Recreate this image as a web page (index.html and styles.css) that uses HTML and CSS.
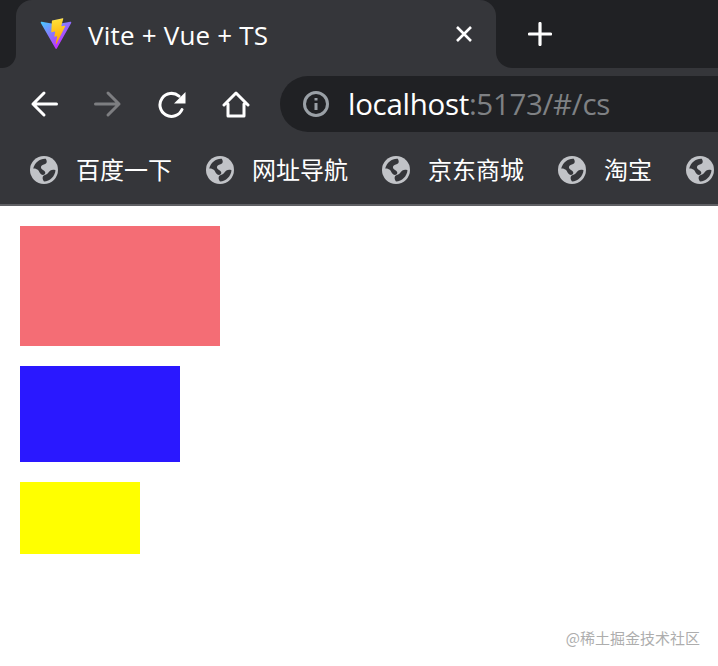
FILE: index.html
```html
<!DOCTYPE html>
<html lang="zh">
<head>
<meta charset="utf-8">
<title>Vite + Vue + TS</title>
<link rel="stylesheet" href="styles.css">
</head>
<body>
<svg class="defs" width="0" height="0" aria-hidden="true">
  <symbol id="globe" viewBox="0 0 28 28">
    <circle cx="14" cy="14" r="14" fill="#c1c3c7"/>
    <path fill="#35363a" d="M15.500 2.800C10 2.500 4.800 6.500 3.200 12.500c1.800-.2 3.600.3 4.900 1.600 1.300 1.300 1.600 3.600 3.300 4.500 1.600.8 3.600.2 3.900-1.500.3-1.800-1.600-2.700-3-3.600-1.300-.9-1.900-2.500-.8-3.700 1.200-1.300 3.500-1.100 4.700-2.500 1-1.200.6-3.400-.7-4.800Z"/>
    <path fill="#35363a" d="M25.500 14.300c-1.800-.7-3.600-.6-5.100.3-1.700 1-2.200 2.900-3.800 3.700-1.500.8-3.200.9-3.800 2.500-.5 1.500 0 3.200 1.200 4.800 6-.4 10.900-5.100 11.500-11.300Z"/>
  </symbol>
  <linearGradient id="vite-a" gradientUnits="userSpaceOnUse" x1="6" y1="33" x2="235" y2="344">
    <stop offset="0" stop-color="#41d1ff"/>
    <stop offset="1" stop-color="#bd34fe"/>
  </linearGradient>
  <linearGradient id="vite-b" gradientUnits="userSpaceOnUse" x1="194.65" y1="8.818" x2="236.076" y2="292.989">
    <stop offset="0" stop-color="#ffea83"/>
    <stop offset=".083" stop-color="#ffdd35"/>
    <stop offset="1" stop-color="#ffa800"/>
  </linearGradient>
</svg>

<header class="chrome">
  <div class="tabstrip">
    <div class="strip-edge"></div>
    <div class="tab">
      <svg class="tab-logo" viewBox="0 0 410 404" aria-hidden="true">
        <path fill="url(#vite-a)" d="M399.641 59.525 215.643 388.545c-3.799 6.793-13.559 6.833-17.415.073L10.582 59.556C6.38 52.19 12.68 43.266 21.028 44.76l184.195 32.923c1.175.21 2.378.208 3.553-.006l180.343-32.87c8.32-1.517 14.649 7.337 10.522 14.719Z"/>
        <path fill="url(#vite-b)" d="M292.965 1.574 156.801 28.255a5 5 0 0 0-4.03 4.611l-8.376 141.464c-.197 3.332 2.863 5.918 6.115 5.168l37.91-8.749c3.547-.818 6.752 2.306 6.023 5.873l-11.263 55.153c-.758 3.712 2.727 6.886 6.352 5.785l23.415-7.114c3.63-1.102 7.118 2.081 6.35 5.796l-17.899 86.633c-1.12 5.419 6.088 8.374 9.094 3.728l2.008-3.103 110.954-221.428c1.858-3.707-1.346-7.935-5.418-7.15l-39.022 7.532c-3.667.707-6.787-2.708-5.752-6.296l25.469-88.291c1.036-3.594-2.095-7.012-5.766-6.293Z"/>
      </svg>
      <span class="tab-title">Vite + Vue + TS</span>
      <svg class="tab-close" viewBox="0 0 18 18" aria-hidden="true"><path d="M2 2l14 14M16 2L2 16"/></svg>
    </div>
    <div class="strip-rest">
      <svg class="new-tab" viewBox="0 0 24 24" aria-hidden="true"><path d="M12 1.500v21M1.500 12h21"/></svg>
    </div>
  </div>

  <div class="toolbar">
    <svg class="nav-icon" viewBox="0 0 28 28" aria-hidden="true"><path d="M26.500 14H3M14 3 3 14l11 11"/></svg>
    <svg class="nav-icon nav-off" viewBox="0 0 28 28" aria-hidden="true"><path d="M1.500 14H25M14 3l11 11-11 11"/></svg>
    <svg class="nav-icon" viewBox="0 0 28 28" aria-hidden="true"><path d="M24 19.500A11.500 11.500 0 1 1 21 6.200"/><path class="nav-fill" d="M27.500 2v11.500H16Z"/></svg>
    <svg class="nav-icon" viewBox="0 0 28 28" aria-hidden="true"><path class="nav-join" d="M6 14v12h16V14M2 15 14 3l12 12"/></svg>
    <div class="omnibox">
      <svg class="info" viewBox="0 0 26 26" aria-hidden="true">
        <circle cx="13" cy="13" r="11.500"/>
        <path d="M13 12v7M13 7v2.500"/>
      </svg>
      <div class="url"><span class="url-host">localhost</span>:5173/#/cs</div>
    </div>
  </div>

  <nav class="bookmarks">
    <a class="bookmark"><svg class="globe" aria-hidden="true"><use href="#globe"/></svg><span class="bookmark-label">百度一下</span></a>
    <a class="bookmark"><svg class="globe" aria-hidden="true"><use href="#globe"/></svg><span class="bookmark-label">网址导航</span></a>
    <a class="bookmark"><svg class="globe" aria-hidden="true"><use href="#globe"/></svg><span class="bookmark-label">京东商城</span></a>
    <a class="bookmark"><svg class="globe" aria-hidden="true"><use href="#globe"/></svg><span class="bookmark-label">淘宝</span></a>
    <a class="bookmark"><svg class="globe" aria-hidden="true"><use href="#globe"/></svg></a>
  </nav>
</header>

<main class="content">
  <div class="box box-red"></div>
  <div class="box box-blue"></div>
  <div class="box box-yellow"></div>
</main>

<div class="watermark">@稀土掘金技术社区</div>
</body>
</html>
```

FILE: styles.css
```css
* { box-sizing: border-box; }

html, body {
  margin: 0;
  height: 666px;
  overflow: hidden;
  background: #fff;
}

body {
  position: relative;
  font-family: "Open Sans", "Noto Sans CJK SC", sans-serif;
}

.defs { display: block; height: 0; }

.chrome {
  display: flex;
  flex-direction: column;
  height: 206px;
  background: #35363a;
  border-bottom: 2px solid #5f6064;
}

/* tab strip */
.tabstrip {
  display: flex;
  height: 68px;
  flex: none;
  background: linear-gradient(#202124 50%, #35363a 50%);
}

.strip-edge {
  width: 16px;
  background: #202124;
  border-bottom-right-radius: 14px;
}

.tab {
  display: flex;
  align-items: center;
  width: 480px;
  padding: 0 24px 0 24px;
  background: #35363a;
  border-radius: 16px 16px 0 0;
}

.tab-logo { width: 32px; height: 32px; flex: none; }

.tab-title {
  flex: 1;
  margin: 2px 0 0 16px;
  color: #fff;
  font-size: 26px;
  line-height: 32px;
  letter-spacing: .2px;
}

.tab-close {
  width: 18px;
  height: 18px;
  flex: none;
  margin-right: -1px;
  fill: none;
  stroke: #fff;
  stroke-width: 2.600;
}

.strip-rest {
  flex: 1;
  display: flex;
  align-items: center;
  padding: 0 0 0 32px;
  background: #202124;
  border-bottom-left-radius: 16px;
}

.new-tab {
  width: 24px;
  height: 24px;
  fill: none;
  stroke: #fff;
  stroke-width: 3.200;
  stroke-linecap: round;
}

/* toolbar */
.toolbar {
  display: flex;
  align-items: center;
  height: 68px;
  flex: none;
  padding: 8px 0 4px 30px;
  gap: 36px;
}

.nav-icon {
  width: 28px;
  height: 28px;
  flex: none;
  fill: none;
  stroke: #fff;
  stroke-width: 3;
  stroke-linecap: round;
  stroke-linejoin: round;
}

.nav-off { stroke: #7d7e81; }

.nav-fill { fill: #fff; stroke: none; }

.omnibox {
  flex: 1;
  display: flex;
  align-items: center;
  height: 56px;
  margin-left: -6px;
  padding-left: 23px;
  background: #202124;
  border-radius: 28px 0 0 28px;
}

.info {
  width: 26px;
  height: 26px;
  flex: none;
  fill: none;
  stroke: #9aa0a6;
  stroke-width: 3;
}

.url {
  margin-left: 19px;
  color: #7f8184;
  font-size: 29.500px;
  line-height: 40px;
  letter-spacing: -.3px;
}

.url-host { color: #fff; }

/* bookmarks */
.bookmarks {
  display: flex;
  align-items: center;
  flex: 1;
  padding: 0 0 0 30px;
  gap: 34px;
  overflow: hidden;
}

.bookmark {
  display: flex;
  align-items: center;
  flex: none;
  gap: 18px;
  color: #fff;
  font-family: "Noto Sans CJK SC", sans-serif;
  font-size: 24px;
  line-height: 32px;
}

.bookmark-label { margin-top: -2px; }

.globe { width: 28px; height: 28px; flex: none; }

/* page */
.content {
  display: flex;
  flex-direction: column;
  align-items: flex-start;
  gap: 20px;
  padding: 20px;
}

.box-red { width: 200px; height: 120px; background: #f46d75; }
.box-blue { width: 160px; height: 96px; background: #2a18ff; }
.box-yellow { width: 120px; height: 72px; background: #ffff00; }

.watermark {
  position: absolute;
  right: 18px;
  bottom: 18px;
  color: #adadad;
  font-family: "Noto Sans CJK SC", sans-serif;
  font-size: 15px;
  line-height: 20px;
}
```
